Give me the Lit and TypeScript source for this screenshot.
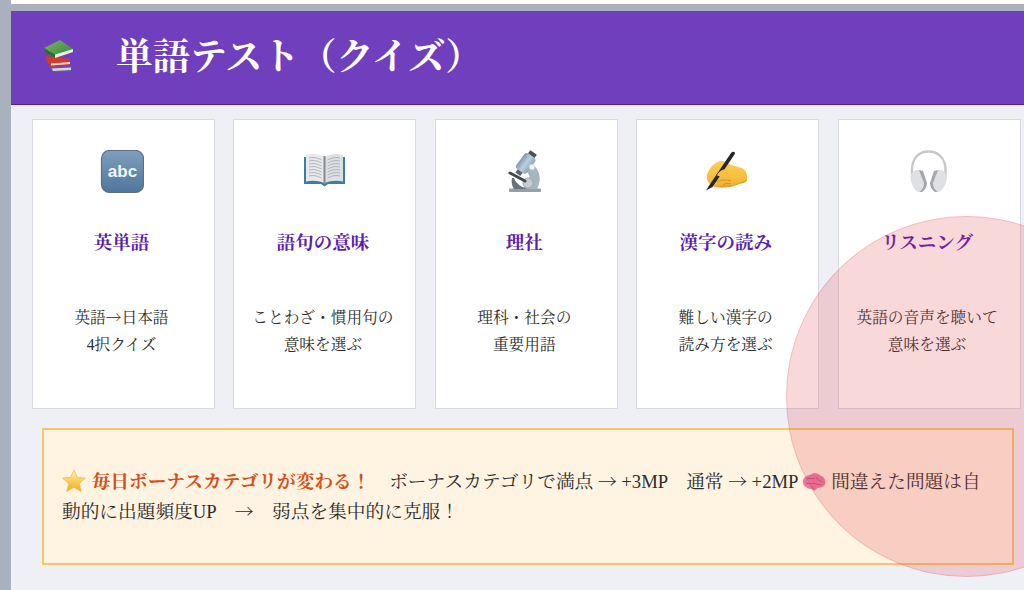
import { LitElement, html, css } from "lit";
import { customElement } from "lit/decorators.js";

const books = html`<svg class="emoji-head" viewBox="0 0 36 36"><defs><linearGradient id="bg" x1="0" y1="0" x2="1" y2="1"><stop offset="0" stop-color="#7cba62"/><stop offset="1" stop-color="#2f7f3a"/></linearGradient></defs>
<path d="M6 26 L11 32.500 L29 31.500 L29 27 L10 27Z" fill="#5a5f9e"/><path d="M10 28.500 L29 27.500 L29 30 L11 31Z" fill="#d4d8de"/>
<path d="M4 16 L5 22 L9 27 L28 25.500 L28 19 Z" fill="#d5392b"/><path d="M9 23.500 L28 22 L28 24 L9 25.500Z" fill="#ecdccc"/>
<path d="M2 8 L18 0 L31 9 L31 12 L13 18 L7 15Z" fill="url(#bg)"/><path d="M13 14.500 L31 9 L31 12 L13 18Z" fill="#e9f0e4"/><path d="M2 8 L13 14.500 L13 18 L3 12Z" fill="#2c6b32"/></svg>`;

const abc = html`<svg class="icon" viewBox="0 0 44 44"><defs><linearGradient id="ag" x1="0" y1="0" x2="0" y2="1"><stop offset="0" stop-color="#7f9fbd"/><stop offset="1" stop-color="#4f769b"/></linearGradient></defs>
<rect x="1.500" y=".5" width="42" height="42" rx="8" fill="url(#ag)" stroke="#5d6f80" stroke-width="1.200"/>
<text x="22.500" y="27" text-anchor="middle" font-family="Liberation Sans, sans-serif" font-weight="700" font-size="17" fill="#f2f5f8">abc</text></svg>`;

const book = html`<svg class="icon" viewBox="0 0 44 44"><path d="M3 7 H44 V34 H27 L23.500 36.500 L20 34 H3Z" fill="#3b7f9e"/>
<path d="M5 5 C11 3 18 4 23 7 V33 C18 30.500 11 30 5 31.500Z" fill="#e6e8eb"/><path d="M42 5 C36 3 29 4 24 7 V33 C29 30.500 36 30 42 31.500Z" fill="#dcdfe3"/>
<path d="M8 8 C12 7 16 7.500 20.500 10 M8 11 C12 10 16 10.500 20.500 13 M8 14 C12 13 16 13.500 20.500 16 M8 17 C12 16 16 16.500 20.500 19 M8 20 C12 19 16 19.500 20.500 22 M8 23 C12 22 16 22.500 20.500 25 M8 26 C12 25 16 25.500 20.500 28 M39 8 C35 7 31 7.500 26.500 10 M39 11 C35 10 31 10.500 26.500 13 M39 14 C35 13 31 13.500 26.500 16 M39 17 C35 16 31 16.500 26.500 19 M39 20 C35 19 31 19.500 26.500 22 M39 23 C35 22 31 22.500 26.500 25 M39 26 C35 25 31 25.500 26.500 28" stroke="#aab0b7" stroke-width=".9" fill="none"/>
<rect x="22.500" y="6" width="2" height="28" fill="#85878c"/></svg>`;

const microscope = html`<svg class="icon" viewBox="0 0 44 44"><defs><linearGradient id="tg" x1="0" y1="0" x2="1" y2="0"><stop offset="0" stop-color="#7f97a8"/><stop offset=".5" stop-color="#b9d0e0"/><stop offset="1" stop-color="#8ea7b8"/></linearGradient></defs>
<rect x="7" y="38.500" width="32" height="3.500" rx="1" fill="#93a0a8"/>
<path d="M26 13 C37 15 41 29 35 39 L18 39 C27 35 31 27 24 21Z" fill="#a9b5bc"/>
<circle cx="26" cy="33" r="5" fill="#c6ced3" stroke="#9aa5ac"/>
<path d="M12 28 C15 35 20 37 25 39 L12 39 C10 36 9 32 10 28Z" fill="#6a7278"/>
<path d="M8 23 L23 31" stroke="#43494e" stroke-width="3" stroke-linecap="round"/>
<g transform="rotate(36 24 13)"><rect x="17.500" y="4" width="13" height="19" rx="3" fill="url(#tg)"/><rect x="20" y="0" width="8" height="4" fill="#4a5157"/><rect x="21" y="23" width="6" height="4" fill="#59646c"/></g>
<circle cx="30" cy="17" r="2.800" fill="#f1f3f5" stroke="#c5ccd1" stroke-width=".6"/></svg>`;

const writing = html`<svg class="icon" viewBox="0 0 44 44"><defs><linearGradient id="hg" x1="0" y1="0" x2="0" y2="1"><stop offset="0" stop-color="#fcd054"/><stop offset="1" stop-color="#f4b234"/></linearGradient></defs>
<path d="M3 25 C5 18 10 13 16 11 C20 10 24 14 28 15 L38 18 C42 20 44 25 43 30 C41 34 36 33 32 35 C26 38 14 38 9 36 C5 34 2 30 3 25Z" fill="url(#hg)"/>
<path d="M10 36.500 C15 35.500 21 34.500 26 35 C30 35 36 33 43 29.500 L43 30 C41 34 36 33 32 35 C26 38 14 38 10 36.500Z" fill="#e5a22e"/>
<path d="M13 32 C17 29.500 23 29.500 27 31 M19 35 C21 33 24 33 27 34" stroke="#c98a22" stroke-width=".9" fill="none"/>
<path d="M2 40.500 L5.500 35 L27 3 C29 .5 32 2 30.500 4.500 L8.500 37 Z" fill="#23262b"/><path d="M23 24 C21 27 16 27 13 25.500 C15 21 20 18 25 20Z" fill="#f9c040"/></svg>`;

const phones = html`<svg class="icon" viewBox="0 0 44 44"><path d="M7 27 V20 C7 8 14 1.500 23.500 1.500 C33 1.500 40.500 8 40.500 20 V27" fill="none" stroke="#c6c8cb" stroke-width="2.400"/>
<path d="M8 22 C11 19 15 19 16 22 L19 33 C19 37 16 41 13 42 C9 40 5.500 33 5.500 27 C5.500 25 6 23 8 22Z" fill="#dfe0e3"/><path d="M14 20 L19 33 C19 37 17 40 14 42 L17 42 C20 40 22 37 22 33 L18 21Z" fill="#a3a6ab"/>
<path d="M39 22 C36 19 32 19 31 22 L28 33 C28 37 31 41 34 42 C38 40 42 33 42 27 C42 25 41 23 39 22Z" fill="#dfe0e3"/><path d="M33 20 L28 33 C28 37 30 40 33 42 L30 42 C27 40 25 37 25 33 L29 21Z" fill="#a3a6ab"/></svg>`;

const star = html`<svg class="inl star" viewBox="0 0 24 24"><defs><linearGradient id="sg" x1="0" y1="0" x2="0" y2="1"><stop offset="0" stop-color="#fff4a8"/><stop offset="1" stop-color="#f2aa1e"/></linearGradient></defs><path d="M12 1 L15.300 8.300 L23.500 9.200 L17.300 14.500 L19.200 22.500 L12 18.300 L4.800 22.500 L6.700 14.500 L.5 9.200 L8.700 8.300Z" fill="url(#sg)" stroke="#e9b94a" stroke-width=".7" stroke-linejoin="round"/></svg>`;

const brain = html`<svg class="inl brain" viewBox="0 0 24 20"><path d="M1 11 C0 7 4 3 8 3 C11 0 17 1 19 4 C23 5 24 10 23 12 C22 15 18 16 15 16 C14 19 11 19 10 17 C6 17 2 15 1 11Z" fill="#e87a9f"/>
<path d="M5 7 C8 5 10 8 13 6 M15 5 C14 8 18 8 20 10 M4 12 C7 10 9 13 12 11 C14 13 17 12 19 13 M10 14 C10 15 11 16 12 17" stroke="#bd4a74" stroke-width=".9" fill="none"/></svg>`;

const arrow = html`<span class="arrow">→</span>`;

interface Card { icon: unknown; title: string; lines: [unknown, string]; }
const cards: Card[] = [
  { icon: abc, title: "英単語", lines: [html`英語${arrow}日本語`, "4択クイズ"] },
  { icon: book, title: "語句の意味", lines: ["ことわざ・慣用句の", "意味を選ぶ"] },
  { icon: microscope, title: "理社", lines: ["理科・社会の", "重要用語"] },
  { icon: writing, title: "漢字の読み", lines: ["難しい漢字の", "読み方を選ぶ"] },
  { icon: phones, title: "リスニング", lines: ["英語の音声を聴いて", "意味を選ぶ"] },
];

@customElement("app-root")
export class AppRoot extends LitElement {
  static styles = css`
    :host {
      display: block;
      position: relative;
      width: 1024px;
      height: 590px;
      overflow: hidden;
      background: #a9b1bc;
      font-family: "Liberation Serif", "Noto Serif CJK JP", "Noto Sans CJK JP", serif;
      color: #2c2c2c;
    }
    .topline { height: 4px; margin-left: 11px; background: #fff; }
    .page { margin: 7px 0 0 11px; height: 579px; background: #eff0f5; display: flex; flex-direction: column; }
    header {
      height: 93px; flex: none; background: #6f3fbd; border-bottom: 1px solid #4f1fa6;
      display: flex; align-items: center; padding-left: 31px;
      color: #fff;
    }
    .emoji-head { width: 36px; height: 36px; margin-right: 38px; }
    h1 { margin: 0; font-size: 37px; font-weight: 700; line-height: 1; }
    .grid {
      display: grid; grid-template-columns: repeat(5, 183px); column-gap: 18.400px;
      padding: 14px 0 0 21px;
    }
    .card {
      box-sizing: border-box; height: 290px; background: #fff; border: 1px solid #d9dbe3;
      display: flex; flex-direction: column; align-items: center; padding: 30px 4px 0 0;
    }
    .icon { width: 44px; height: 44px; display: block; }
    h2 { margin: 37px 0 0; font-size: 18.500px; line-height: 24px; font-weight: 700; color: #5a1fb0; }
    .lines { margin-top: 49px; font-size: 15.700px; line-height: 27px; text-align: center; }
    .notice {
      box-sizing: border-box; margin: 19px 0 0 31px; width: 972px; height: 137px;
      background: #fff3e2; border: 2px solid #f6c768;
      padding: 0 18px; display: flex; align-items: center;
      font-size: 18.700px; line-height: 30px;
    }
    .notice p { margin: 0; }
    .arrow { font-family: "Noto Serif CJK JP", "Noto Sans CJK JP", serif; line-height: 1; }
    .hot { color: #d4501a; font-weight: 700; }
    .inl { display: inline-block; vertical-align: -5px; }
    .star { width: 24px; height: 24px; margin-right: 1px; }
    .brain { width: 24px; height: 20px; vertical-align: -4px; }
    .touch {
      position: absolute; left: 786px; top: 216px; width: 361px; height: 361px; border-radius: 50%;
      background: rgba(225, 60, 70, 0.2); border: 1px solid rgba(200, 80, 90, 0.2); box-sizing: border-box;
    }
  `;

  render() {
    return html`
      <div class="topline"></div>
      <div class="page">
        <header>${books}<h1>単語テスト（クイズ）</h1></header>
        <div class="grid">
          ${cards.map(
            (c) => html`<div class="card">${c.icon}<h2>${c.title}</h2>
              <div class="lines">${c.lines[0]}<br />${c.lines[1]}</div></div>`
          )}
        </div>
        <div class="notice"><p>${star} <span class="hot">毎日ボーナスカテゴリが変わる！</span>　ボーナスカテゴリで満点 ${arrow} +3MP　通常 ${arrow} +2MP ${brain} 間違えた問題は自動的に出題頻度UP　${arrow}　弱点を集中的に克服！</p></div>
      </div>
      <div class="touch"></div>
    `;
  }
}
